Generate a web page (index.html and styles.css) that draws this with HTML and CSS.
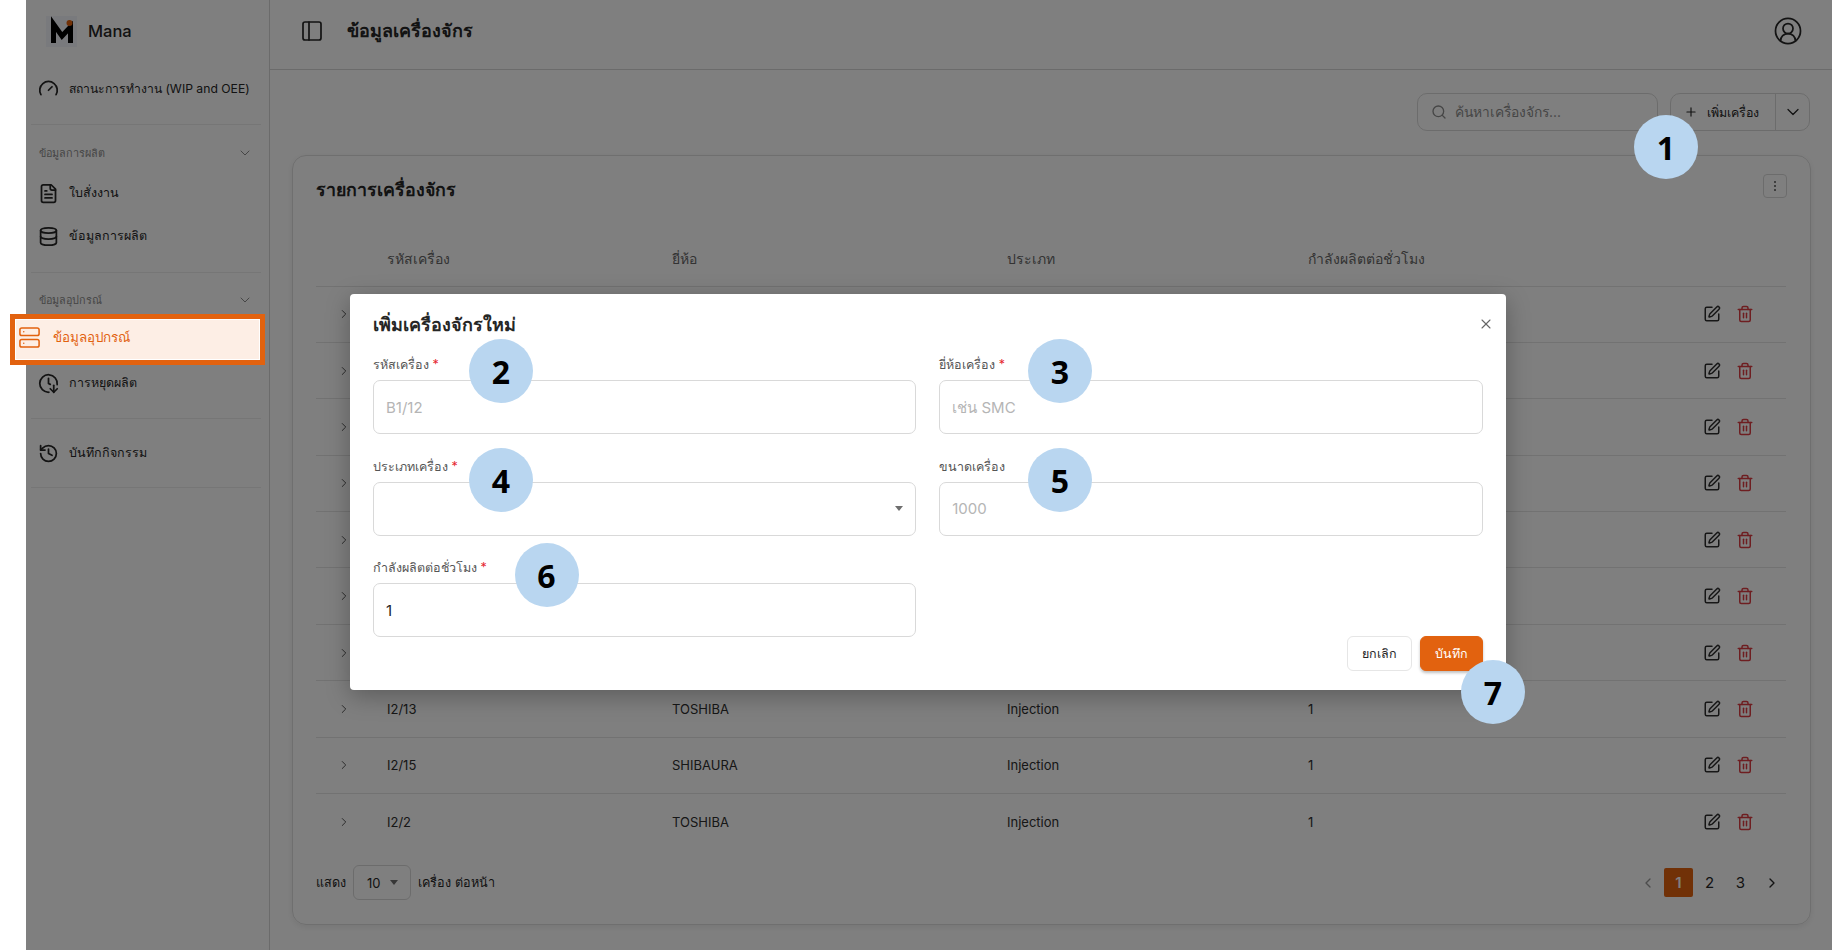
FILE: index.html
```html
<!DOCTYPE html>
<html lang="th">
<head>
    <meta charset="UTF-8">
    <meta name="viewport" content="width=device-width, initial-scale=1.0">
    <title>ข้อมูลเครื่องจักร</title>
    <link rel="stylesheet" href="styles.css">
</head>
<body>
    <svg class="icon-defs" aria-hidden="true">
        <symbol id="i-gauge" viewBox="0 0 24 24"><path d="m12 14 4-4"/><path d="M3.34 19a10 10 0 1 1 17.32 0"/></symbol>
        <symbol id="i-file" viewBox="0 0 24 24"><path d="M15 2H6a2 2 0 0 0-2 2v16a2 2 0 0 0 2 2h12a2 2 0 0 0 2-2V7Z"/><path d="M14 2v4a2 2 0 0 0 2 2h4"/><path d="M10 9H8"/><path d="M16 13H8"/><path d="M16 17H8"/></symbol>
        <symbol id="i-database" viewBox="0 0 24 24"><ellipse cx="12" cy="5" rx="9" ry="3"/><path d="M3 5V19A9 3 0 0 0 21 19V5"/><path d="M3 12A9 3 0 0 0 21 12"/></symbol>
        <symbol id="i-server" viewBox="0 0 24 24"><rect width="20" height="8" x="2" y="2" rx="2"/><rect width="20" height="8" x="2" y="14" rx="2"/><path d="M6 6h.01"/><path d="M6 18h.01"/></symbol>
        <symbol id="i-clock-down" viewBox="0 0 24 24"><path d="M12 6v6l2 1"/><path d="M12.337 21.994a10 10 0 1 1 9.588-8.767"/><path d="m14 18 4 4 4-4"/><path d="M18 14v8"/></symbol>
        <symbol id="i-history" viewBox="0 0 24 24"><path d="M3 12a9 9 0 1 0 9-9 9.75 9.75 0 0 0-6.74 2.74L3 8"/><path d="M3 3v5h5"/><path d="M12 7v5l4 2"/></symbol>
        <symbol id="i-down" viewBox="0 0 24 24"><path d="m6 9 6 6 6-6"/></symbol>
        <symbol id="i-right" viewBox="0 0 24 24"><path d="m9 18 6-6-6-6"/></symbol>
        <symbol id="i-left" viewBox="0 0 24 24"><path d="m15 18-6-6 6-6"/></symbol>
        <symbol id="i-edit" viewBox="0 0 24 24"><path d="M12 3H5a2 2 0 0 0-2 2v14a2 2 0 0 0 2 2h14a2 2 0 0 0 2-2v-7"/><path d="M18.375 2.625a1 1 0 0 1 3 3l-9.013 9.014a2 2 0 0 1-.853.505l-2.873.84a.5.5 0 0 1-.62-.62l.84-2.873a2 2 0 0 1 .506-.852z"/></symbol>
        <symbol id="i-trash" viewBox="0 0 24 24"><path d="M3 6h18"/><path d="M19 6v14c0 1-1 2-2 2H7c-1 0-2-1-2-2V6"/><path d="M8 6V4c0-1 1-2 2-2h4c1 0 2 1 2 2v2"/><path d="M10 11v6"/><path d="M14 11v6"/></symbol>
    </svg>

    <div class="app">
        <aside class="sidebar">
            <div class="brand">
                <span class="brand-logo">
                    <svg viewBox="0 0 31 31" width="31" height="31">
                        <path class="logo-m" d="M7.500 27V8l8.500 12 8.500-9V27"/>
                        <circle class="logo-dot" cx="23.500" cy="7" r="3"/>
                    </svg>
                </span>
                <span class="brand-name">Mana</span>
            </div>

            <div class="nav-group nav-group-first">
                <a class="nav-item nav-item-status"><svg class="icon"><use href="#i-gauge"/></svg>สถานะการทำงาน (WIP and OEE)</a>
            </div>

            <div class="nav-group nav-group-production">
                <div class="nav-section">ข้อมูลการผลิต<svg class="icon-sm"><use href="#i-down"/></svg></div>
                <a class="nav-item"><svg class="icon"><use href="#i-file"/></svg>ใบสั่งงาน</a>
                <a class="nav-item"><svg class="icon"><use href="#i-database"/></svg>ข้อมูลการผลิต</a>
            </div>

            <div class="nav-group nav-group-device">
                <div class="nav-section">ข้อมูลอุปกรณ์<svg class="icon-sm"><use href="#i-down"/></svg></div>
                <a class="nav-item nav-item-active"><svg class="icon-active"><use href="#i-server"/></svg>ข้อมูลอุปกรณ์</a>
                <a class="nav-item"><svg class="icon"><use href="#i-clock-down"/></svg>การหยุดผลิต</a>
            </div>

            <div class="nav-group nav-group-log">
                <a class="nav-item"><svg class="icon"><use href="#i-history"/></svg>บันทึกกิจกรรม</a>
            </div>
        </aside>

        <main class="main">
            <header class="topbar">
                <svg class="icon-panel" viewBox="0 0 24 24"><rect width="18" height="18" x="3" y="3" rx="2"/><path d="M9 3v18"/></svg>
                <h1>ข้อมูลเครื่องจักร</h1>
                <svg class="icon-user" viewBox="0 0 24 24"><path d="M18 20a6 6 0 0 0-12 0"/><circle cx="12" cy="10" r="4"/><circle cx="12" cy="12" r="10"/></svg>
            </header>

            <div class="content">
                <div class="toolbar">
                    <div class="search">
                        <svg class="icon-search" viewBox="0 0 24 24"><circle cx="11" cy="11" r="8"/><path d="m21 21-4.300-4.300"/></svg>
                        <span>ค้นหาเครื่องจักร...</span>
                    </div>
                    <div class="split-btn">
                        <div class="split-main">
                            <svg class="icon-plus" viewBox="0 0 24 24"><path d="M5 12h14"/><path d="M12 5v14"/></svg>
                            เพิ่มเครื่อง
                        </div>
                        <div class="split-arrow"><svg class="icon-arrow"><use href="#i-down"/></svg></div>
                    </div>
                </div>

                <section class="card">
                    <div class="card-head">
                        <h2>รายการเครื่องจักร</h2>
                        <div class="more-btn"><i></i><i></i><i></i></div>
                    </div>

                    <div class="row row-head">
                        <span></span>
                        <span>รหัสเครื่อง</span>
                        <span>ยี่ห้อ</span>
                        <span>ประเภท</span>
                        <span>กำลังผลิตต่อชั่วโมง</span>
                    </div>

                    <div class="row"><svg class="icon-chev"><use href="#i-right"/></svg><span></span><span></span><span></span><span></span><div class="actions"><svg class="icon-edit"><use href="#i-edit"/></svg><svg class="icon-trash"><use href="#i-trash"/></svg></div></div>
                    <div class="row"><svg class="icon-chev"><use href="#i-right"/></svg><span></span><span></span><span></span><span></span><div class="actions"><svg class="icon-edit"><use href="#i-edit"/></svg><svg class="icon-trash"><use href="#i-trash"/></svg></div></div>
                    <div class="row"><svg class="icon-chev"><use href="#i-right"/></svg><span></span><span></span><span></span><span></span><div class="actions"><svg class="icon-edit"><use href="#i-edit"/></svg><svg class="icon-trash"><use href="#i-trash"/></svg></div></div>
                    <div class="row"><svg class="icon-chev"><use href="#i-right"/></svg><span></span><span></span><span></span><span></span><div class="actions"><svg class="icon-edit"><use href="#i-edit"/></svg><svg class="icon-trash"><use href="#i-trash"/></svg></div></div>
                    <div class="row"><svg class="icon-chev"><use href="#i-right"/></svg><span></span><span></span><span></span><span></span><div class="actions"><svg class="icon-edit"><use href="#i-edit"/></svg><svg class="icon-trash"><use href="#i-trash"/></svg></div></div>
                    <div class="row"><svg class="icon-chev"><use href="#i-right"/></svg><span></span><span></span><span></span><span></span><div class="actions"><svg class="icon-edit"><use href="#i-edit"/></svg><svg class="icon-trash"><use href="#i-trash"/></svg></div></div>
                    <div class="row"><svg class="icon-chev"><use href="#i-right"/></svg><span></span><span></span><span></span><span></span><div class="actions"><svg class="icon-edit"><use href="#i-edit"/></svg><svg class="icon-trash"><use href="#i-trash"/></svg></div></div>
                    <div class="row"><svg class="icon-chev"><use href="#i-right"/></svg><span>I2/13</span><span>TOSHIBA</span><span>Injection</span><span>1</span><div class="actions"><svg class="icon-edit"><use href="#i-edit"/></svg><svg class="icon-trash"><use href="#i-trash"/></svg></div></div>
                    <div class="row"><svg class="icon-chev"><use href="#i-right"/></svg><span>I2/15</span><span>SHIBAURA</span><span>Injection</span><span>1</span><div class="actions"><svg class="icon-edit"><use href="#i-edit"/></svg><svg class="icon-trash"><use href="#i-trash"/></svg></div></div>
                    <div class="row row-last"><svg class="icon-chev"><use href="#i-right"/></svg><span>I2/2</span><span>TOSHIBA</span><span>Injection</span><span>1</span><div class="actions"><svg class="icon-edit"><use href="#i-edit"/></svg><svg class="icon-trash"><use href="#i-trash"/></svg></div></div>

                    <div class="table-foot">
                        <div class="page-size">
                            แสดง
                            <div class="size-select">10<b class="caret"></b></div>
                            เครื่อง ต่อหน้า
                        </div>
                        <div class="pager">
                            <svg class="icon-page icon-page-off"><use href="#i-left"/></svg>
                            <span class="page page-on">1</span>
                            <span class="page">2</span>
                            <span class="page">3</span>
                            <svg class="icon-page icon-page-next"><use href="#i-right"/></svg>
                        </div>
                    </div>
                </section>
            </div>
        </main>

        <div class="overlay"></div>
    </div>

    <div class="modal">
        <div class="modal-head">
            <h3>เพิ่มเครื่องจักรใหม่</h3>
            <svg class="icon-close" viewBox="0 0 24 24"><path d="M18 6 6 18"/><path d="m6 6 12 12"/></svg>
        </div>
        <div class="form-grid">
            <div class="field">
                <label>รหัสเครื่อง <em>*</em></label>
                <input type="text" placeholder="B1/12">
            </div>
            <div class="field">
                <label>ยี่ห้อเครื่อง <em>*</em></label>
                <input type="text" placeholder="เช่น SMC">
            </div>
            <div class="field">
                <label>ประเภทเครื่อง <em>*</em></label>
                <div class="select-box"><b class="caret"></b></div>
            </div>
            <div class="field">
                <label>ขนาดเครื่อง</label>
                <input type="text" placeholder="1000">
            </div>
            <div class="field">
                <label>กำลังผลิตต่อชั่วโมง <em>*</em></label>
                <input type="text" value="1">
            </div>
        </div>
        <div class="modal-foot">
            <button class="btn">ยกเลิก</button>
            <button class="btn btn-primary">บันทึก</button>
        </div>
    </div>

    <!-- numbered callouts on top of the screenshot -->
    <span class="marker marker-1">1</span>
    <span class="marker marker-2">2</span>
    <span class="marker marker-3">3</span>
    <span class="marker marker-4">4</span>
    <span class="marker marker-5">5</span>
    <span class="marker marker-6">6</span>
    <span class="marker marker-7">7</span>
</body>
</html>
```
FILE: styles.css
```css
:root {
    --text-color: #262626;
    --muted-color: #8c8c8c;
    --line-color: #e4e4e4;
    --border-color: #d9d9d9;
    --accent-color: #e2620f;
    --danger-color: #dc3c42;
}

* {
    box-sizing: border-box;
}

html, body {
    height: 100%;
}

body {
    margin: 0;
    background-color: #ffffff;
    color: var(--text-color);
    font-family: 'Inter', 'Noto Sans', sans-serif;
    font-size: 13px;
    overflow: hidden;
}

.icon-defs {
    display: none;
}

svg {
    fill: none;
    stroke: currentColor;
    stroke-width: 2;
    stroke-linecap: round;
    stroke-linejoin: round;
    flex-shrink: 0;
}

.app {
    position: relative;
    display: flex;
    height: 950px;
    margin-left: 26px;
    background-color: #ffffff;
}

.overlay {
    position: absolute;
    inset: 0;
    z-index: 10;
    background-color: rgba(0, 0, 0, 0.5);
}

/* Sidebar */
.sidebar {
    width: 244px;
    padding: 0 8px 0 5px;
    border-right: 1px solid #d6d6d6;
}

.brand {
    display: flex;
    align-items: flex-start;
    gap: 11px;
    height: 67px;
    padding: 16px 0 0 15px;
}

.brand-logo {
    width: 31px;
    height: 31px;
    background-color: #f3f5fa;
}

.logo-m {
    stroke: #000000;
    stroke-width: 5;
    stroke-linecap: butt;
    stroke-linejoin: miter;
}

.logo-dot {
    fill: var(--accent-color);
    stroke: none;
}

.brand-name {
    font-size: 16.500px;
    font-weight: 500;
    line-height: 31px;
}

.nav-group {
    border-bottom: 1px solid #ececec;
}

.nav-group-first {
    padding-bottom: 15px;
}

.nav-group-production {
    padding: 16px 0 15px;
}

.nav-group-device {
    padding: 15px 0 14px;
}

.nav-group-log {
    padding: 13px 0;
}

.nav-section {
    display: flex;
    align-items: center;
    justify-content: space-between;
    height: 24px;
    padding: 0 8px;
    color: var(--muted-color);
    font-size: 10.800px;
}

.nav-group-production .nav-section {
    margin-bottom: 7px;
}

.nav-item {
    display: flex;
    align-items: center;
    gap: 10.500px;
    height: 42px;
    margin-bottom: 1px;
    padding-left: 6.500px;
    font-size: 12.500px;
    color: #262626;
}

.nav-item-status {
    white-space: nowrap;
    font-size: 12.200px;
}

.nav-group-first .nav-item,
.nav-group-log .nav-item,
.nav-group-production .nav-item:last-child,
.nav-group-device .nav-item:last-child {
    margin-bottom: 0;
}

/* highlighted by the callout box, so it sits above the dim layer */
.nav-item-active {
    position: relative;
    z-index: 20;
    gap: 12px;
    width: 255.500px;
    height: 51px;
    margin: 2px 0 -3px -21.500px;
    padding: 0 0 4px 3.500px;
    background-color: #fdeee5;
    border: 5px solid var(--accent-color);
    outline: 1px solid #ffffff;
    outline-offset: -6px;
    color: var(--accent-color);
    font-size: 13.400px;
}

.icon {
    width: 21px;
    height: 21px;
}

.icon-active {
    width: 23px;
    height: 23px;
    stroke-width: 1.600;
}

.icon-sm {
    width: 16px;
    height: 16px;
    stroke-width: 1.500;
}

.icon-arrow {
    width: 20px;
    height: 20px;
    stroke-width: 1.500;
}

/* Main */
.main {
    flex: 1;
    min-width: 0;
}

.topbar {
    display: flex;
    align-items: center;
    height: 70px;
    padding: 0 29px 8px 30px;
    border-bottom: 1px solid #d7d7d7;
}

.topbar h1 {
    flex: 1;
    margin: 0 0 0 23px;
    font-size: 18px;
    font-weight: 600;
}

.icon-panel {
    width: 24px;
    height: 24px;
    stroke-width: 1.700;
}

.icon-user {
    width: 30px;
    height: 30px;
    stroke-width: 1.400;
}

.content {
    padding: 23px 21px 0 22px;
}

.toolbar {
    display: flex;
    justify-content: flex-end;
    gap: 12px;
    padding-right: 1px;
}

.search {
    display: flex;
    align-items: center;
    gap: 8px;
    width: 241px;
    height: 38px;
    padding-left: 13px;
    border: 1px solid var(--border-color);
    border-radius: 10px;
    color: var(--muted-color);
    font-size: 13.800px;
}

.icon-search {
    width: 16px;
    height: 16px;
}

.split-btn {
    display: flex;
    width: 140px;
    height: 38px;
    border: 1px solid var(--border-color);
    border-radius: 10px;
    font-size: 12.400px;
}

.split-main {
    display: flex;
    align-items: center;
    gap: 9px;
    width: 105px;
    padding-left: 13px;
    border-right: 1px solid var(--border-color);
}

.icon-plus {
    width: 14px;
    height: 14px;
}

.split-arrow {
    display: flex;
    align-items: center;
    justify-content: center;
    flex: 1;
}

.card {
    height: 770px;
    margin-top: 24px;
    padding: 0 24px 0 23px;
    border: 1px solid #dedede;
    border-radius: 14px;
    box-shadow: 0 2px 6px rgba(0, 0, 0, 0.08);
}

.card-head {
    display: flex;
    justify-content: space-between;
    height: 76.500px;
    padding-top: 19px;
}

.card-head h2 {
    margin: 0;
    font-size: 17.800px;
    font-weight: 600;
    line-height: 30px;
}

.more-btn {
    display: flex;
    flex-direction: column;
    align-items: center;
    justify-content: center;
    gap: 2px;
    width: 24px;
    height: 24px;
    margin: -1px -1px 0 0;
    border: 1px solid var(--border-color);
    border-radius: 4px;
}

.more-btn i {
    width: 2px;
    height: 2px;
    border-radius: 50%;
    background-color: #555555;
}

.row {
    display: grid;
    grid-template-columns: 71px 285px 335px 301px 1fr 120px;
    align-items: center;
    height: 56.400px;
    border-bottom: 1px solid var(--line-color);
    color: #2e2e2e;
}

.row-head {
    height: 54px;
    padding-bottom: 1px;
    color: #666666;
    font-size: 14px;
}

.row-last {
    border-bottom: none;
}

.icon-chev {
    width: 14px;
    height: 14px;
    margin-left: 21px;
    stroke: #555555;
    stroke-width: 1.700;
}

.actions {
    display: flex;
    justify-content: flex-end;
    gap: 15px;
    padding-right: 32px;
}

.icon-edit,
.icon-trash {
    width: 18px;
    height: 18px;
}

.icon-trash {
    color: var(--danger-color);
}

.table-foot {
    display: flex;
    align-items: center;
    justify-content: space-between;
    margin-top: 15px;
}

.page-size {
    display: flex;
    align-items: center;
    gap: 7px;
    font-size: 12.600px;
}

.size-select {
    display: flex;
    align-items: center;
    justify-content: space-between;
    width: 58px;
    height: 35px;
    padding: 0 12px 0 13px;
    border: 1px solid var(--border-color);
    border-radius: 6px;
    font-size: 13px;
}

.caret {
    width: 0;
    height: 0;
    border-left: 4.500px solid transparent;
    border-right: 4.500px solid transparent;
    border-top: 5px solid #6e6e6e;
}

.pager {
    display: flex;
    align-items: center;
    gap: 2px;
    padding-right: 6px;
}

.page {
    display: flex;
    align-items: center;
    justify-content: center;
    width: 29px;
    height: 29px;
    font-size: 15px;
}

.page-on {
    background-color: var(--accent-color);
    border-radius: 2px;
    color: #ffffff;
    font-weight: 600;
}

.icon-page {
    width: 16px;
    height: 16px;
}

.icon-page-off {
    margin-right: 6px;
    color: #999999;
}

.icon-page-next {
    margin-left: 7px;
}

/* Modal */
.modal {
    position: absolute;
    top: 294px;
    left: 350px;
    z-index: 15;
    width: 1156px;
    height: 396px;
    padding: 15px 23.500px 0 23px;
    background-color: #ffffff;
    border-radius: 4px;
    box-shadow: 0 6px 24px rgba(0, 0, 0, 0.28);
}

.modal-head {
    display: flex;
    align-items: center;
    justify-content: space-between;
    height: 30px;
}

.modal-head h3 {
    margin: 0;
    font-size: 18px;
    font-weight: 600;
}

.icon-close {
    width: 16px;
    height: 16px;
    margin-right: -11px;
    stroke: #666666;
    stroke-width: 1.600;
}

.form-grid {
    display: grid;
    grid-template-columns: 1fr 1fr;
    gap: 21.500px 23px;
    margin-top: 15px;
}

.field label {
    display: block;
    height: 22px;
    margin-bottom: 4px;
    color: #555555;
    font-size: 12.500px;
    line-height: 22px;
}

.field em {
    color: #e5262e;
    font-style: normal;
}

.field input,
.select-box {
    display: flex;
    align-items: center;
    justify-content: flex-end;
    width: 100%;
    height: 54px;
    padding: 0 12px;
    background-color: #ffffff;
    border: 1px solid var(--border-color);
    border-radius: 7px;
    color: #262626;
    font-family: inherit;
    font-size: 15px;
    outline: none;
}

.field input::placeholder {
    color: #b5b5b5;
}

.modal-foot {
    display: flex;
    justify-content: flex-end;
    gap: 8px;
    margin-top: -1px;
}

.btn {
    height: 35px;
    padding: 0;
    width: 64.500px;
    background-color: #ffffff;
    border: 1px solid #e6e6e6;
    border-radius: 6px;
    color: #262626;
    font-family: inherit;
    font-size: 12.500px;
}

.btn-primary {
    width: 63px;
    background-color: var(--accent-color);
    border-color: var(--accent-color);
    color: #ffffff;
    box-shadow: 0 2px 3px rgba(0, 0, 0, 0.25);
}

/* Numbered callouts */
.marker {
    position: absolute;
    z-index: 30;
    display: flex;
    align-items: center;
    justify-content: center;
    width: 64px;
    height: 64px;
    margin: -32px 0 0 -32px;
    background-color: #b9d6f0;
    border-radius: 50%;
    color: #000000;
    font-family: 'Noto Sans', sans-serif;
    font-size: 32px;
    font-weight: 700;
}

.marker-1 { left: 1666px; top: 147px; }
.marker-2 { left: 501px; top: 371px; }
.marker-3 { left: 1060px; top: 371px; }
.marker-4 { left: 501px; top: 480px; }
.marker-5 { left: 1060px; top: 480px; }
.marker-6 { left: 546.500px; top: 575px; }
.marker-7 { left: 1493px; top: 692px; }
```
